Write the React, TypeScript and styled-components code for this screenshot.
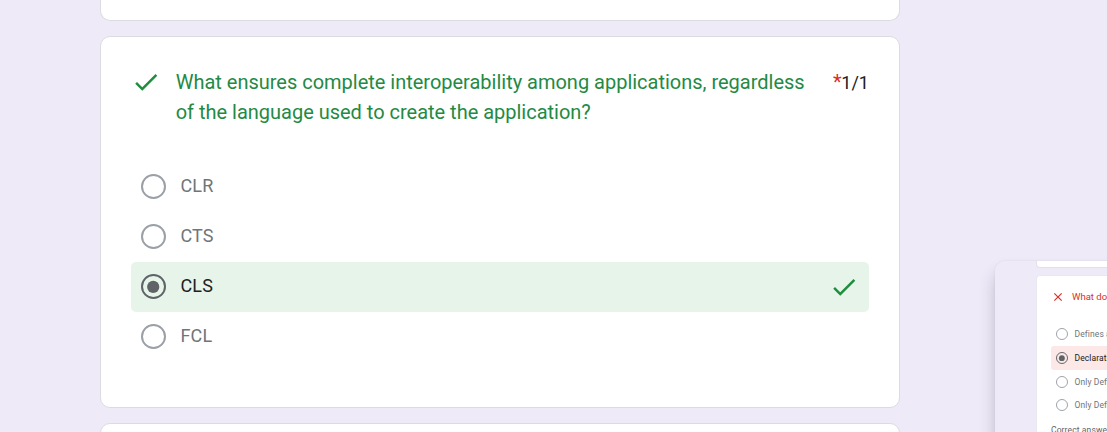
import React from "react";
import styled, { createGlobalStyle } from "styled-components";

const GlobalStyle = createGlobalStyle`
  * { box-sizing: border-box; }
  body {
    margin: 0;
    overflow: hidden;
    background: #eeeaf8;
    font-family: Roboto, "Liberation Sans", sans-serif;
  }
`;

const Page = styled.main`
  position: relative;
  width: 1107px;
  height: 432px;
  overflow: hidden;
  background: #eeeaf8;
`;

const Column = styled.div`
  display: flex;
  flex-direction: column;
  gap: 15px;
  width: 800px;
  margin-left: 100px;
`;

const Card = styled.section<{ $edge?: "top" | "bottom" }>`
  flex: none;
  height: ${(p) => (p.$edge === "top" ? 21 : p.$edge === "bottom" ? 40 : 372)}px;
  padding: ${(p) => (p.$edge ? "0" : "29px 30px")};
  background: #fff;
  border: 1px solid #dadce0;
  ${(p) => p.$edge === "top" && "border-top: 0;"}
  border-radius: ${(p) => (p.$edge === "top" ? "0 0 10px 10px" : "10px")};
`;

const Heading = styled.header`
  display: flex;
  align-items: flex-start;
  height: 96px;
`;

const CheckSvg = styled.svg<{ $drop?: number }>`
  display: block;
  flex: none;
  width: 30px;
  height: 30px;
  margin-top: ${(p) => p.$drop ?? 0}px;
  fill: #1e8e3e;
`;

const Title = styled.h2`
  flex: none;
  width: 642px;
  margin: 1px 0 0 14.7px;
  font-size: 20px;
  font-weight: 400;
  line-height: 30px;
  letter-spacing: -0.01px;
  color: #238a44;
`;

const Score = styled.div`
  margin: 1px 0 0 auto;
  font-size: 18px;
  line-height: 30px;
  letter-spacing: 0;
  white-space: nowrap;
  color: #202124;
`;

const Required = styled.span`
  font-size: 20px;
  letter-spacing: -0.3px;
  color: #d93025;
`;

const Option = styled.div<{ $selected?: boolean }>`
  display: flex;
  align-items: center;
  height: 50px;
  padding: 0 10px 1px;
  border-radius: 5px;
  background: ${(p) => (p.$selected ? "#e6f4ea" : "transparent")};
  color: ${(p) => (p.$selected ? "#202124" : "#70757a")};
  font-size: 18px;
  letter-spacing: 0.15px;
`;

const OptionLabel = styled.span`
  flex: 1;
  margin-left: 14.5px;
  line-height: 25px;
  padding-bottom: 2.5px;
`;

const Radio = styled.svg<{ $size: number; $selected?: boolean }>`
  display: block;
  flex: none;
  width: ${(p) => p.$size}px;
  height: ${(p) => p.$size}px;
  color: ${(p) => (p.$selected ? "#5f6368" : "#9aa0a6")};
`;

const Preview = styled.aside`
  position: absolute;
  left: 995px;
  top: 261px;
  width: 320px;
  height: 240px;
  padding-left: 41px;
  overflow: hidden;
  background: #eeeaf8;
  border-radius: 10px;
  display: flex;
  flex-direction: column;
  gap: 7px;
`;

const PreviewShadow = styled.div`
  position: absolute;
  left: 995px;
  top: 261px;
  width: 320px;
  height: 240px;
  border-radius: 10px;
  box-shadow: 0 12px 16px rgba(60, 50, 70, 0.24), 0 0 2px rgba(60, 50, 70, 0.1);
`;

const PreviewCard = styled.div<{ $top?: boolean }>`
  flex: none;
  width: 378px;
  height: ${(p) => (p.$top ? 7 : 220)}px;
  padding: ${(p) => (p.$top ? "0" : "12px 14px")};
  background: #fff;
  border: 1px solid ${(p) => (p.$top ? "#e2e1ea" : "#e9e7f0")};
  ${(p) => p.$top && "border-top: 0;"}
  border-radius: ${(p) => (p.$top ? "0 0 4px 4px" : "4px")};
`;

const PreviewHeading = styled.div`
  display: flex;
  align-items: center;
  height: 17px;
  margin-bottom: 17.4px;
  gap: 7px;
  font-size: 9.5px;
  color: #d93025;
  white-space: nowrap;
`;

const CrossSvg = styled.svg`
  width: 14px;
  height: 14px;
  fill: #d93025;
`;

const PreviewOption = styled.div<{ $selected?: boolean }>`
  display: flex;
  align-items: center;
  gap: 6.5px;
  height: 23.7px;
  padding-left: 5px;
  border-radius: 3px;
  background: ${(p) => (p.$selected ? "#fce8e6" : "transparent")};
  color: ${(p) => (p.$selected ? "#202124" : "#70757a")};
  font-size: 8.5px;
  letter-spacing: 0.1px;
  white-space: nowrap;
`;

const PreviewNote = styled.div`
  margin-top: 7px;
  font-size: 8.5px;
  line-height: 12px;
  letter-spacing: 0.12px;
  color: #5f6368;
`;

const Check = ({ drop }: { drop?: number }) => (
  <CheckSvg viewBox="0 0 24 24" $drop={drop}>
    <path d="M9 16.2L4.8 12l-1.4 1.4L9 19 21 7l-1.4-1.4L9 16.2z" />
  </CheckSvg>
);

const RadioButton = ({ size, selected }: { size: number; selected?: boolean }) => (
  <Radio $size={size} $selected={selected} viewBox="0 0 25 25">
    <circle cx="12.5" cy="12.5" r="11.5" fill="none" stroke="currentColor" strokeWidth="2" />
    {selected && <circle cx="12.2" cy="12.9" r="6.1" fill="currentColor" />}
  </Radio>
);

const answers = [
  { label: "CLR" },
  { label: "CTS" },
  { label: "CLS", selected: true },
  { label: "FCL" },
];

const previewAnswers = [
  { label: "Defines all" },
  { label: "Declaration", selected: true },
  { label: "Only Defines" },
  { label: "Only Defines" },
];

export default function App() {
  return (
    <Page>
      <GlobalStyle />
      <Column>
        <Card $edge="top" />
        <Card>
          <Heading>
            <Check drop={0.6} />
            <Title>
              What ensures complete interoperability among applications, regardless of the
              language used to create the application?
            </Title>
            <Score>
              <Required>*</Required>1/1
            </Score>
          </Heading>
          {answers.map((a) => (
            <Option key={a.label} $selected={a.selected}>
              <RadioButton size={25} selected={a.selected} />
              <OptionLabel>{a.label}</OptionLabel>
              {a.selected && <Check />}
            </Option>
          ))}
        </Card>
        <Card $edge="bottom" />
      </Column>
      <PreviewShadow />
      <Preview>
        <PreviewCard $top />
        <PreviewCard>
          <PreviewHeading>
            <CrossSvg viewBox="0 0 24 24">
              <path d="M19 6.41L17.59 5 12 10.59 6.41 5 5 6.41 10.59 12 5 17.59 6.41 19 12 13.41 17.59 19 19 17.59 13.41 12z" />
            </CrossSvg>
            What does
          </PreviewHeading>
          {previewAnswers.map((a, i) => (
            <PreviewOption key={i} $selected={a.selected}>
              <RadioButton size={12} selected={a.selected} />
              {a.label}
            </PreviewOption>
          ))}
          <PreviewNote>Correct answer</PreviewNote>
        </PreviewCard>
      </Preview>
    </Page>
  );
}
